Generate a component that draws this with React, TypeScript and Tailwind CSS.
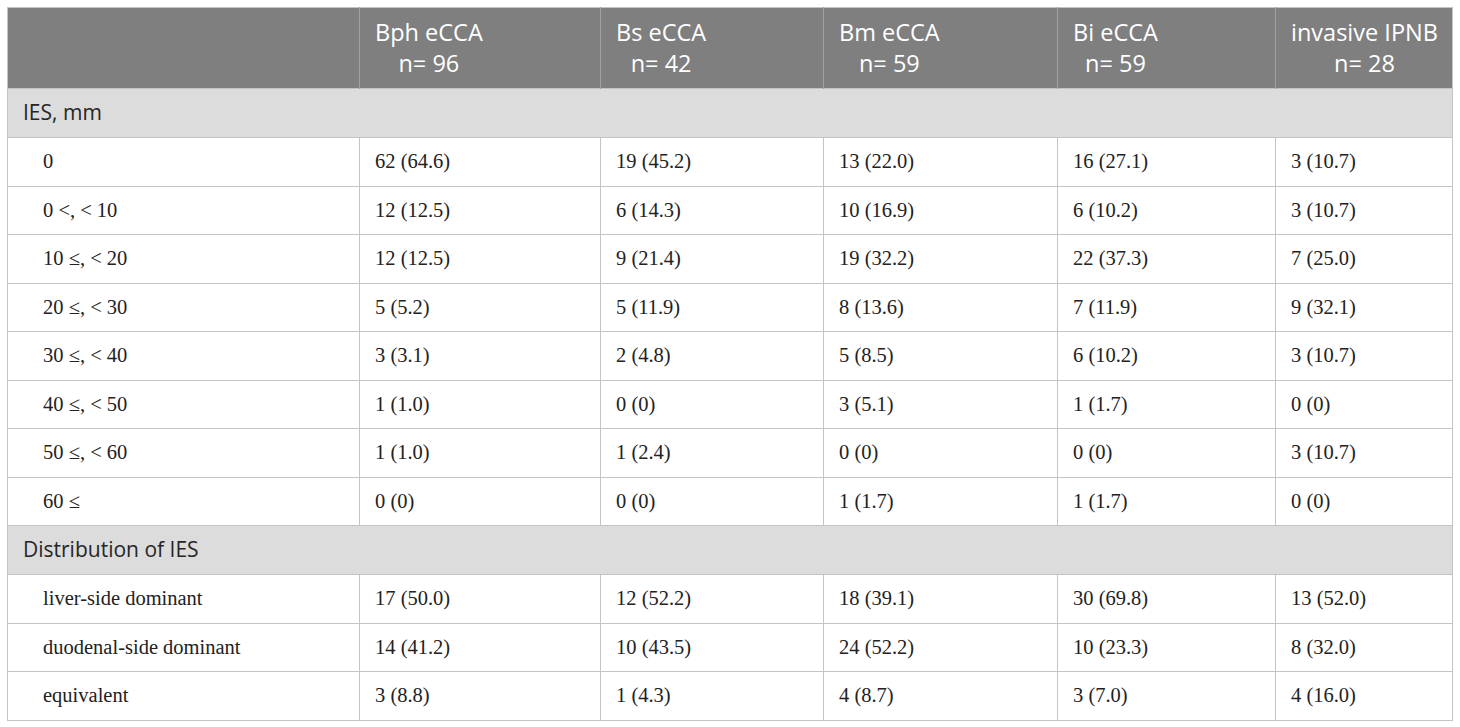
const columns = [
  { name: "Bph eCCA", n: "96" },
  { name: "Bs eCCA", n: "42" },
  { name: "Bm eCCA", n: "59" },
  { name: "Bi eCCA", n: "59" },
  { name: "invasive IPNB", n: "28" },
];

const sections: { title: string; rows: [string, string[]][] }[] = [
  {
    title: "IES, mm",
    rows: [
      ["0", ["62 (64.6)", "19 (45.2)", "13 (22.0)", "16 (27.1)", "3 (10.7)"]],
      ["0 <, < 10", ["12 (12.5)", "6 (14.3)", "10 (16.9)", "6 (10.2)", "3 (10.7)"]],
      ["10 ≤, < 20", ["12 (12.5)", "9 (21.4)", "19 (32.2)", "22 (37.3)", "7 (25.0)"]],
      ["20 ≤, < 30", ["5 (5.2)", "5 (11.9)", "8 (13.6)", "7 (11.9)", "9 (32.1)"]],
      ["30 ≤, < 40", ["3 (3.1)", "2 (4.8)", "5 (8.5)", "6 (10.2)", "3 (10.7)"]],
      ["40 ≤, < 50", ["1 (1.0)", "0 (0)", "3 (5.1)", "1 (1.7)", "0 (0)"]],
      ["50 ≤, < 60", ["1 (1.0)", "1 (2.4)", "0 (0)", "0 (0)", "3 (10.7)"]],
      ["60 ≤", ["0 (0)", "0 (0)", "1 (1.7)", "1 (1.7)", "0 (0)"]],
    ],
  },
  {
    title: "Distribution of IES",
    rows: [
      ["liver-side dominant", ["17 (50.0)", "12 (52.2)", "18 (39.1)", "30 (69.8)", "13 (52.0)"]],
      ["duodenal-side dominant", ["14 (41.2)", "10 (43.5)", "24 (52.2)", "10 (23.3)", "8 (32.0)"]],
      ["equivalent", ["3 (8.8)", "1 (4.3)", "4 (8.7)", "3 (7.0)", "4 (16.0)"]],
    ],
  },
];

const sans = "font-['Open_Sans','Noto_Sans',sans-serif]";
const serif = "font-['Liberation_Serif','Times_New_Roman',serif]";

export default function App() {
  return (
    <div className="min-h-screen bg-white pl-[7px] pt-[7px]">
      <table className="w-[1445px] table-fixed border-collapse border border-[#c4c4c4]">
        <colgroup>
          <col className="w-[352px]" />
          <col className="w-[241px]" />
          <col className="w-[223px]" />
          <col className="w-[234px]" />
          <col className="w-[218px]" />
          <col className="w-[177px]" />
        </colgroup>
        <thead>
          <tr className="h-[81px] bg-[#7f7f7f]">
            <th className="border-r border-[#a0a0a0]" />
            {columns.map((c) => (
              <th
                key={c.name}
                className={`border-l border-[#a0a0a0] pl-[15px] text-left align-middle font-normal text-white ${sans} text-[23.5px] leading-[31px] whitespace-nowrap`}
              >
                <span className="inline-block text-center">
                  {c.name}
                  <br />
                  n= {c.n}
                </span>
              </th>
            ))}
          </tr>
        </thead>
        <tbody>
          {sections.map((s) => (
            <>
              <tr key={s.title} className="h-[49px] bg-[#dcdcdc]">
                <td
                  colSpan={6}
                  className={`border-t border-[#c4c4c4] pl-[15px] text-[21px] text-[#262626] ${sans}`}
                >
                  {s.title}
                </td>
              </tr>
              {s.rows.map(([label, vals]) => (
                <tr key={s.title + label} className={`h-[48.5px] ${serif} text-[20.5px] text-[#222]`}>
                  <td className="border border-[#c4c4c4] pl-[35px]">{label}</td>
                  {vals.map((v, i) => (
                    <td key={i} className="border border-[#c4c4c4] pl-[15px]">
                      {v}
                    </td>
                  ))}
                </tr>
              ))}
            </>
          ))}
        </tbody>
      </table>
    </div>
  );
}
